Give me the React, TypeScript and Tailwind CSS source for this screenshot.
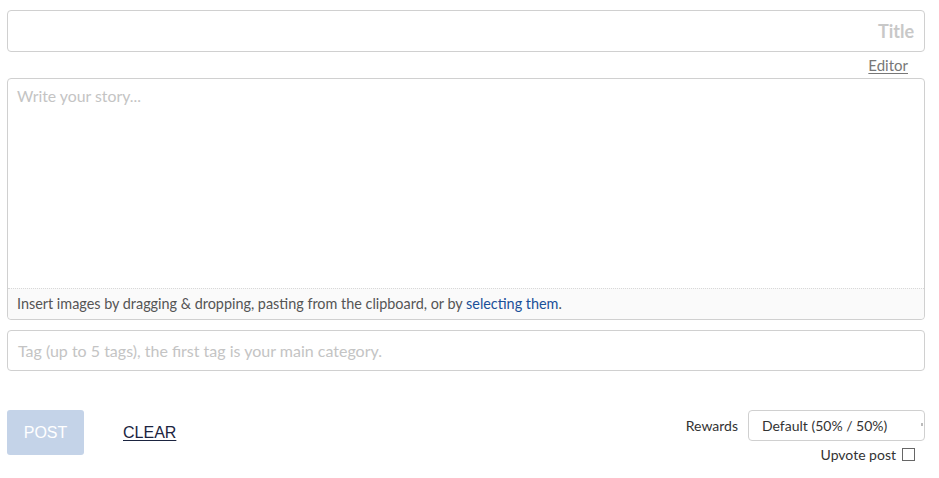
export default function App() {
  const font = { fontFamily: "Lato, 'Noto Sans', sans-serif" };
  return (
    <div className="w-[939px] h-[478px] bg-white" style={font}>
      <div className="pl-[7px] w-[925px] pt-[10px] flex flex-col">
        <div className="h-[42px] border border-[#d0d0d0] rounded-[4px] flex items-center justify-end pr-[10px]">
          <span className="text-[18px] font-bold text-[#c8c8c8]">Title</span>
        </div>
        <div className="h-[26px] flex items-center justify-end pr-[17px]">
          <span className="text-[15px] text-[#777] underline underline-offset-2">Editor</span>
        </div>
        <div className="h-[242px] border border-[#d0d0d0] rounded-[4px] flex flex-col">
          <div className="flex-1 px-[9px] pt-[5px]">
            <span className="text-[15.8px] text-[#c4c4c4]">Write your story...</span>
          </div>
          <div className="h-[31px] border-t border-dotted border-[#d8d8d8] bg-[#fafafa] rounded-b-[4px] flex items-center px-[9px]">
            <span className="text-[14.4px] text-[#555]">
              Insert images by dragging &amp; dropping, pasting from the clipboard, or by{" "}
              <span className="text-[#1a5099]">selecting them</span>.
            </span>
          </div>
        </div>
        <div className="mt-[10px] h-[41px] border border-[#d0d0d0] rounded-[4px] flex items-center px-[10px]">
          <span className="text-[16px] text-[#c4c4c4]">Tag (up to 5 tags), the first tag is your main category.</span>
        </div>
        <div className="mt-[39px] flex justify-between items-start">
          <div className="flex items-center">
            <div
              className="w-[77px] h-[45px] bg-[#c4d3e8] rounded-[3px] flex items-center justify-center text-white text-[16px]"
              style={{ fontFamily: "'Liberation Sans', Arial, sans-serif" }}
            >
              POST
            </div>
            <span
              className="ml-[39px] text-[16px] text-[#1b2440] underline underline-offset-2"
              style={{ fontFamily: "'Liberation Sans', Arial, sans-serif" }}
            >
              CLEAR
            </span>
          </div>
          <div className="flex flex-col items-end">
            <div className="flex items-center">
              <span className="text-[14px] text-[#333] mr-[10px]">Rewards</span>
              <div className="w-[177px] h-[31px] border border-[#d0d0d0] rounded-[4px] flex items-center pl-[13px] relative">
                <span className="text-[14px] text-[#333]">Default (50% / 50%)</span>
                <span className="absolute right-[1px] top-[12px] w-[2px] h-[3px] bg-[#bbb]" />
              </div>
            </div>
            <div className="flex items-center mt-[3px] mr-[10px]">
              <span className="text-[14px] text-[#333] mr-[6px]">Upvote post</span>
              <span className="w-[13px] h-[13px] border border-[#666] bg-white" />
            </div>
          </div>
        </div>
      </div>
    </div>
  );
}
